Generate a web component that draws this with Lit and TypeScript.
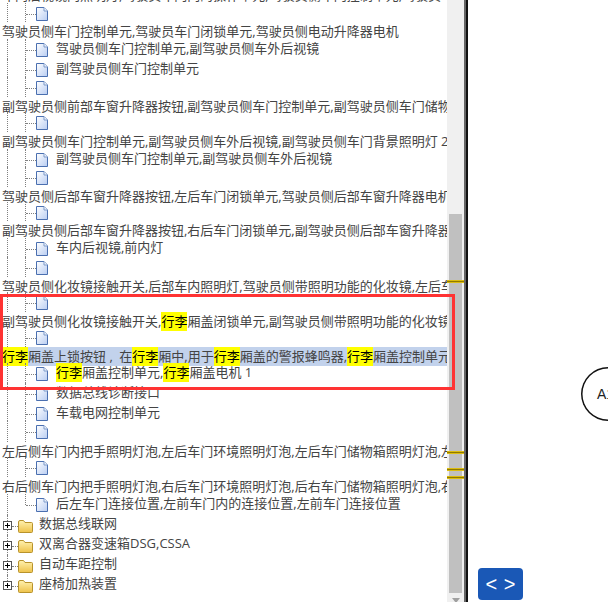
import { LitElement, html, css, svg } from 'lit';
import { customElement } from 'lit/decorators.js';

// kind: t = plain text row, f = file row, d = folder row, s = selected row
// y = vertical centre of the row's label on the page
type Row = { kind: 't' | 'f' | 'd' | 's'; y: number; text?: string; last?: boolean };

const rows: Row[] = [
  { kind: 't', y: -5, text: '车内后视镜内照明灯,驾驶员车门内的操作单元,驾驶员侧车门控制单元,驾驶员' },
  { kind: 'f', y: 12 },
  { kind: 't', y: 31, text: '驾驶员侧车门控制单元,驾驶员车门闭锁单元,驾驶员侧电动升降器电机' },
  { kind: 'f', y: 48, text: '驾驶员侧车门控制单元,副驾驶员侧车外后视镜' },
  { kind: 'f', y: 68, text: '副驾驶员侧车门控制单元' },
  { kind: 'f', y: 86.5 },
  { kind: 't', y: 106, text: '副驾驶员侧前部车窗升降器按钮,副驾驶员侧车门控制单元,副驾驶员侧车门储物箱照明灯' },
  { kind: 'f', y: 121 },
  { kind: 't', y: 141, text: '副驾驶员侧车门控制单元,副驾驶员侧车外后视镜,副驾驶员侧车门背景照明灯 2' },
  { kind: 'f', y: 158, text: '副驾驶员侧车门控制单元,副驾驶员侧车外后视镜' },
  { kind: 'f', y: 176.5 },
  { kind: 't', y: 196, text: '驾驶员侧后部车窗升降器按钮,左后车门闭锁单元,驾驶员侧后部车窗升降器电机' },
  { kind: 'f', y: 211 },
  { kind: 't', y: 230, text: '副驾驶员侧后部车窗升降器按钮,右后车门闭锁单元,副驾驶员侧后部车窗升降器电机' },
  { kind: 'f', y: 247.5, text: '车内后视镜,前内灯' },
  { kind: 'f', y: 266 },
  { kind: 't', y: 286, text: '驾驶员侧化妆镜接触开关,后部车内照明灯,驾驶员侧带照明功能的化妆镜,左后车门' },
  { kind: 'f', y: 301.5 },
  { kind: 't', y: 321, text: '副驾驶员侧化妆镜接触开关,行李厢盖闭锁单元,副驾驶员侧带照明功能的化妆镜,右后' },
  { kind: 'f', y: 336.5 },
  { kind: 's', y: 356, text: '行李厢盖上锁按钮 ,\u2002在行李厢中,用于行李厢盖的警报蜂鸣器,行李厢盖控制单元,行李' },
  { kind: 'f', y: 372.5, text: '行李厢盖控制单元,行李厢盖电机 1' },
  { kind: 'f', y: 392, text: '数据总线诊断接口' },
  { kind: 'f', y: 412.5, text: '车载电网控制单元' },
  { kind: 'f', y: 430.5 },
  { kind: 't', y: 451, text: '左后侧车门内把手照明灯泡,左后车门环境照明灯泡,左后车门储物箱照明灯泡,左后车' },
  { kind: 'f', y: 466 },
  { kind: 't', y: 486, text: '右后侧车门内把手照明灯泡,右后车门环境照明灯泡,后右车门储物箱照明灯泡,右后车' },
  { kind: 'f', y: 503, text: '后左车门连接位置,左前车门内的连接位置,左前车门连接位置', last: true },
  { kind: 'd', y: 524, text: '数据总线联网' },
  { kind: 'd', y: 544, text: '双离合器变速箱DSG,CSSA' },
  { kind: 'd', y: 564, text: '自动车距控制' },
  { kind: 'd', y: 584, text: '座椅加热装置', last: true },
];

const fileIcon = svg`<svg class="ico" width="12" height="14" viewBox="0 0 12 14">
  <defs><linearGradient id="pg" x1="0" y1="0" x2="1" y2="1">
    <stop offset="0" stop-color="#ffffff"/><stop offset="1" stop-color="#b9cdf2"/></linearGradient></defs>
  <path d="M.5 .5H8L11.5 4V13.5H.5Z" fill="url(#pg)" stroke="#4a6fb0"/>
  <path d="M8 .5V4H11.5" fill="#eef3fd" stroke="#7f9ccb"/>
</svg>`;

const folderIcon = svg`<svg class="ico" width="15" height="14" viewBox="0 0 15 14">
  <defs><linearGradient id="fg" x1="0" y1="0" x2="0" y2="1">
    <stop offset="0" stop-color="#fff2b0"/><stop offset="1" stop-color="#eec24a"/></linearGradient></defs>
  <path d="M.5 3V12.5Q.5 13.5 1.5 13.5H13.5Q14.5 13.5 14.5 12.5V4.5Q14.5 3.5 13.5 3.5H7L5.5 1.5H2Q.5 1.5 .5 3Z" fill="url(#fg)" stroke="#b8932c"/>
</svg>`;

const plusBox = svg`<svg class="plus" width="9" height="9" viewBox="0 0 9 9">
  <rect x=".5" y=".5" width="8" height="8" fill="#fff" stroke="#555"/>
  <path d="M2 4.5H7M4.5 2V7" stroke="#000"/>
</svg>`;

@customElement('app-root')
export class AppRoot extends LitElement {
  static styles = css`
    :host {
      display: flex;
      width: 608px;
      height: 602px;
      overflow: hidden;
      position: relative;
      background: #fff;
      font-family: 'Open Sans', 'Noto Sans CJK SC', sans-serif;
      font-size: 13px;
      color: #444;
    }
    .clip {
      width: 447px;
      height: 602px;
      overflow: hidden;
      flex: none;
    }
    .tree {
      margin-top: -14.5px;
    }
    .row {
      display: flex;
      align-items: flex-start;
      white-space: nowrap;
      width: 447px;
      position: relative;
    }
    .plain {
      padding-left: 2px;
      box-sizing: border-box;
    }
    .label {
      line-height: 19px;
      height: 19px;
      flex: none;
    }
    .sel .label {
      background: #c2d2ec;
    }
    .hit {
      background: #ffff00;
      color: #000;
      display: inline-block;
    }
    .g1 {
      width: 7px;
      align-self: stretch;
      flex: none;
      border-right: 1px dotted #808080;
    }
    .g2 {
      width: 17px;
      align-self: stretch;
      flex: none;
      border-right: 1px dotted #808080;
    }
    .g2.end {
      align-self: flex-start;
      height: 11px;
    }
    .dash {
      width: 10px;
      margin-top: 11px;
      border-top: 1px dotted #808080;
      flex: none;
    }
    .ico {
      flex: none;
      margin-top: 4px;
    }
    .file .label {
      margin-left: 8px;
    }
    .plus {
      flex: none;
      margin: 6px 0 0 3px;
      position: relative;
    }
    .dir::before {
      content: '';
      position: absolute;
      left: 7px;
      top: 0;
      bottom: 0;
      border-left: 1px dotted #808080;
    }
    .dir.end::before {
      bottom: auto;
      height: 10px;
    }
    .dir .dash {
      width: 6px;
    }
    .dir .label {
      margin: -1px 0 0 6px;
    }
    .scroll {
      width: 17px;
      height: 602px;
      flex: none;
      background: #f0f0f0;
      position: relative;
      box-sizing: border-box;
      padding: 214px 2px 0;
    }
    .thumb {
      width: 13px;
      height: 379px;
      background: #c0c0c0;
    }
    .arrow {
      position: absolute;
      left: 5px;
      bottom: -1px;
      border: 4px solid transparent;
      border-top: 5px solid #a0a0a0;
      border-bottom: 0;
    }
    .mark {
      position: absolute;
      left: 0;
      width: 17px;
      height: 3px;
      box-sizing: border-box;
      background: #8f7a00;
      border-top: 1px solid #dcbc10;
      border-bottom: 1px solid #dcbc10;
    }
    .divider {
      width: 4px;
      flex: none;
      height: 602px;
      background: #111;
      border-left: 2px solid #666;
      box-sizing: border-box;
    }
    .frame {
      position: absolute;
      left: 0;
      top: 294px;
      width: 455px;
      height: 96px;
      border: 3px solid #ff3333;
      box-sizing: border-box;
    }
    .node {
      position: absolute;
      left: 581px;
      top: 367px;
      width: 54px;
      height: 54px;
      box-shadow: inset 0 0 0 1.5px #111;
      border-radius: 50%;
      box-sizing: border-box;
      display: flex;
      align-items: center;
      padding-left: 16px;
      color: #222;
      font-family: 'Liberation Sans', sans-serif;
      font-size: 14px;
    }
    .nav {
      position: absolute;
      left: 478px;
      top: 568px;
      width: 45px;
      height: 32px;
      background: #1a58b6;
      border-radius: 4px;
      color: #fff;
      display: flex;
      align-items: center;
      justify-content: center;
      font-family: 'Liberation Sans', sans-serif;
      font-size: 20px;
      word-spacing: 1px;
    }
  `;

  private label(text: string) {
    const parts = text.split('行李');
    return html`<span class="label">${parts.map((p, i) =>
      i < parts.length - 1 ? html`${p}<span class="hit">行李</span>` : p)}</span>`;
  }

  private renderRow(r: Row, next?: Row) {
    const st = `height:${next ? next.y - r.y : 20}px`;
    if (r.kind === 't' || r.kind === 's') {
      return html`<div class="row plain ${r.kind === 's' ? 'sel' : ''}" style=${st}>${this.label(r.text!)}</div>`;
    }
    if (r.kind === 'd') {
      return html`<div class="row dir ${r.last ? 'end' : ''}" style=${st}>
        ${plusBox}<span class="dash"></span>${folderIcon}${this.label(r.text!)}
      </div>`;
    }
    return html`<div class="row file" style=${st}>
      <span class="g1"></span><span class="g2 ${r.last ? 'end' : ''}"></span><span class="dash"></span>${fileIcon}
      ${r.text ? this.label(r.text) : ''}
    </div>`;
  }

  render() {
    return html`
      <div class="clip">
        <div class="tree">${rows.map((r, i) => this.renderRow(r, rows[i + 1]))}</div>
      </div>
      <div class="scroll">
        <div class="thumb"></div>
        <span class="mark" style="top:280px"></span>
        <span class="mark" style="top:451px"></span>
        <span class="mark" style="top:468px"></span>
        <span class="mark" style="top:476px"></span>
        <span class="arrow"></span>
      </div>
      <div class="divider"></div>
      <div class="frame"></div>
      <div class="node">A1</div>
      <div class="nav">&lt; &gt;</div>
    `;
  }
}
